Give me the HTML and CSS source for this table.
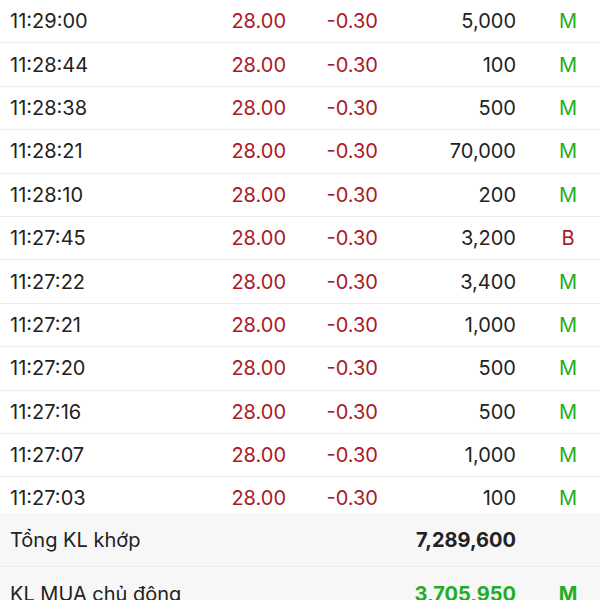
FILE: index.html
```html
<!DOCTYPE html>
<html lang="vi">
<head>
<meta charset="utf-8">
<link rel="stylesheet" href="styles.css">
</head>
<body>
<div class="list">
  <div class="row"><span class="time">11:29:00</span><span class="price">28.00</span><span class="chg">-0.30</span><span class="vol">5,000</span><span class="side m">M</span></div>
  <div class="row"><span class="time">11:28:44</span><span class="price">28.00</span><span class="chg">-0.30</span><span class="vol">100</span><span class="side m">M</span></div>
  <div class="row"><span class="time">11:28:38</span><span class="price">28.00</span><span class="chg">-0.30</span><span class="vol">500</span><span class="side m">M</span></div>
  <div class="row"><span class="time">11:28:21</span><span class="price">28.00</span><span class="chg">-0.30</span><span class="vol">70,000</span><span class="side m">M</span></div>
  <div class="row"><span class="time">11:28:10</span><span class="price">28.00</span><span class="chg">-0.30</span><span class="vol">200</span><span class="side m">M</span></div>
  <div class="row"><span class="time">11:27:45</span><span class="price">28.00</span><span class="chg">-0.30</span><span class="vol">3,200</span><span class="side b">B</span></div>
  <div class="row"><span class="time">11:27:22</span><span class="price">28.00</span><span class="chg">-0.30</span><span class="vol">3,400</span><span class="side m">M</span></div>
  <div class="row"><span class="time">11:27:21</span><span class="price">28.00</span><span class="chg">-0.30</span><span class="vol">1,000</span><span class="side m">M</span></div>
  <div class="row"><span class="time">11:27:20</span><span class="price">28.00</span><span class="chg">-0.30</span><span class="vol">500</span><span class="side m">M</span></div>
  <div class="row"><span class="time">11:27:16</span><span class="price">28.00</span><span class="chg">-0.30</span><span class="vol">500</span><span class="side m">M</span></div>
  <div class="row"><span class="time">11:27:07</span><span class="price">28.00</span><span class="chg">-0.30</span><span class="vol">1,000</span><span class="side m">M</span></div>
  <div class="row"><span class="time">11:27:03</span><span class="price">28.00</span><span class="chg">-0.30</span><span class="vol">100</span><span class="side m">M</span></div>
</div>
<div class="summary">
  <div class="srow"><span class="label">Tổng KL khớp</span><span class="svol">7,289,600</span><span class="side"></span></div>
  <div class="srow"><span class="label">KL MUA chủ động</span><span class="svol green">3,705,950</span><span class="side m bold">M</span></div>
</div>
</body>
</html>
```
FILE: styles.css
```css
html, body {
  margin: 0;
  padding: 0;
  background: #fff;
  overflow: hidden;
}
body {
  font-family: Inter, "Noto Sans", sans-serif;
  font-size: 20px;
  color: #222;
  width: 600px;
  height: 600px;
}
.list {
  height: 513px;
  overflow: hidden;
}
.row {
  height: 43.4px;
  box-sizing: border-box;
  border-bottom: 1px solid #ececec;
  display: grid;
  grid-template-columns: 200px 86px 92px 138px 1fr;
  align-items: center;
}
.time { padding-left: 10px; }
.price, .chg, .vol { text-align: right; }
.price, .chg { color: #a81a26; }
.side { text-align: center; padding-left: 20px; }
.m { color: #22ad22; }
.b { color: #a81a26; }
.summary {
  background: #f7f7f7;
}
.srow {
  height: 54px;
  box-sizing: border-box;
  border-bottom: 1px solid #ebebeb;
  display: grid;
  grid-template-columns: 378px 138px 1fr;
  align-items: center;
}
.label { padding-left: 10px; }
.svol { text-align: right; font-weight: 700; }
.green { color: #22ad22; }
.bold { font-weight: 700; }
```
